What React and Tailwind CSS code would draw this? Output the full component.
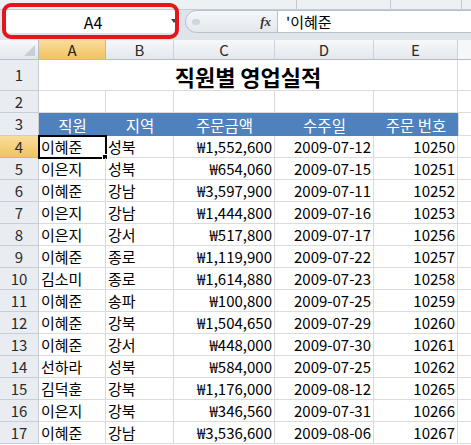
import React from "react";

const cols = [
  { key: "A", w: "w-[67px]" },
  { key: "B", w: "w-[68px]" },
  { key: "C", w: "w-[101px]" },
  { key: "D", w: "w-[99px]" },
  { key: "E", w: "w-[84px]" },
];

const rows = [
  ["이혜준", "성북", "₩1,552,600", "2009-07-12", "10250"],
  ["이은지", "성북", "₩654,060", "2009-07-15", "10251"],
  ["이혜준", "강남", "₩3,597,900", "2009-07-11", "10252"],
  ["이은지", "강남", "₩1,444,800", "2009-07-16", "10253"],
  ["이은지", "강서", "₩517,800", "2009-07-17", "10256"],
  ["이혜준", "종로", "₩1,119,900", "2009-07-22", "10257"],
  ["김소미", "종로", "₩1,614,880", "2009-07-23", "10258"],
  ["이혜준", "송파", "₩100,800", "2009-07-25", "10259"],
  ["이혜준", "강북", "₩1,504,650", "2009-07-29", "10260"],
  ["이혜준", "강서", "₩448,000", "2009-07-30", "10261"],
  ["선하라", "성북", "₩584,000", "2009-07-25", "10262"],
  ["김덕훈", "강북", "₩1,176,000", "2009-08-12", "10265"],
  ["이은지", "강북", "₩346,560", "2009-07-31", "10266"],
  ["이혜준", "강남", "₩3,536,600", "2009-08-06", "10267"],
];

const headers = ["직원", "지역", "주문금액", "수주일", "주문 번호"];

function RowHead({ n, h, active }) {
  return (
    <div
      className={`w-[39px] ${h} shrink-0 flex items-center justify-center border-b border-r ${
        active
          ? "bg-gradient-to-b from-[#f9dc9c] to-[#f1c35e] border-r-[#f29436] border-b-[#e0b45a]"
          : "bg-[#e9edf2] border-[#c7cdd6]"
      } text-[15px] text-[#2a2a2a]`}
    >
      {n}
    </div>
  );
}

function Cell({ w, align = "left", children, className = "" }) {
  const a =
    align === "right" ? "justify-end pr-[2px]" : align === "center" ? "justify-center" : "justify-start pl-[2px]";
  return (
    <div
      className={`${w} shrink-0 flex items-center ${a} border-r border-b border-[#d9dbde] whitespace-nowrap ${className}`}
    >
      {children}
    </div>
  );
}

export default function App() {
  return (
    <div className="relative w-[471px] h-[445px] overflow-hidden bg-white font-['Noto_Sans_CJK_KR','Liberation_Sans',sans-serif] text-black leading-[20px]">
      {/* ribbon edge */}
      <div className="h-[10px] flex bg-[#eef1f4] border-b border-[#c4cbd5]">
        <div className="w-[297px] border-r border-[#c4cbd5]" />
        <div className="w-[94px] border-r border-[#c4cbd5]" />
        <div className="w-[71px] border-r border-[#c4cbd5]" />
      </div>

      {/* formula bar */}
      <div className="h-[30px] bg-[#dfe4ea] flex items-start">
        <div className="w-[176px] ml-[4px] h-[23px] bg-white flex items-center relative">
          <span className="flex-1 text-center text-[16px] pl-[2px]">A4</span>
          <span className="absolute right-[3px] top-[9px] w-0 h-0 border-l-[3px] border-r-[3px] border-t-[4px] border-l-transparent border-r-transparent border-t-[#444]" />
        </div>
        <div className="ml-[5px] w-[93px] h-[23px] rounded-l-full border border-[#b8c0cb] bg-gradient-to-b from-[#f4f6f8] to-[#e4e8ed] flex items-center relative">
          <span className="ml-[6px] w-[8px] h-[6px] rounded-full bg-[#cfd5dc]" />
          <span className="ml-auto mr-[6px] italic font-['Liberation_Serif',serif] font-bold text-[13px] text-[#333]">
            fx
          </span>
        </div>
        <div className="flex-1 h-[23px] bg-white border-y border-[#b8c0cb] flex items-center pl-[8px] text-[15px]">
          '이혜준
        </div>
      </div>

      {/* column headers */}
      <div className="h-[20px] flex bg-gradient-to-b from-[#f7f8fa] to-[#e3e7ec] border-b border-[#b6bec9]">
        <div className="w-[39px] shrink-0 border-r border-[#b6bec9] relative">
          <span className="absolute right-[3px] bottom-[3px] w-[11px] h-[11px] bg-[#c9cfd6] [clip-path:polygon(100%_0,100%_100%,0_100%)]" />
        </div>
        {cols.map((c) => (
          <div
            key={c.key}
            className={`${c.w} shrink-0 flex items-center justify-center text-[15px] border-r ${
              c.key === "A"
                ? "bg-gradient-to-b from-[#f9dc9c] to-[#f1c35e] border-[#e0b45a] text-[#222]"
                : "border-[#cdd3db] text-[#2a2a2a]"
            }`}
          >
            {c.key}
          </div>
        ))}
        <div className="flex-1 bg-[#f6f7f9]" />
      </div>

      {/* row 1 - title */}
      <div className="flex h-[31px]">
        <RowHead n={1} h="h-[31px]" />
        <div className="w-[419px] shrink-0 flex items-end justify-center pb-[1px] border-r border-b border-[#d9dbde] text-[22px] leading-[26px] font-bold">
          직원별 영업실적
        </div>
        <div className="flex-1 border-b border-[#d9dbde]" />
      </div>

      {/* row 2 */}
      <div className="flex h-[22px]">
        <RowHead n={2} h="h-[22px]" />
        {cols.map((c) => (
          <Cell key={c.key} w={c.w} />
        ))}
        <div className="flex-1 border-b border-[#d9dbde]" />
      </div>

      {/* row 3 - table header */}
      <div className="flex h-[23px]">
        <RowHead n={3} h="h-[23px]" />
        <div className="flex bg-[#4f81bd] text-white text-[15.5px]">
          {cols.map((c, i) => (
            <div key={c.key} className={`${c.w} shrink-0 flex items-center justify-center whitespace-nowrap`}>
              {headers[i]}
            </div>
          ))}
        </div>
        <div className="flex-1 border-l border-b border-[#d9dbde]" />
      </div>

      {/* data rows */}
      {rows.map((r, i) => (
        <div key={i} className="flex h-[22px] text-[15px]">
          <RowHead n={i + 4} h="h-[22px]" active={i === 0} />
          <Cell w={cols[0].w} className="relative">
            {r[0]}
            {i === 0 && (
              <>
                <span className="absolute -left-[1px] -top-[1px] w-[69px] h-[24px] border-2 border-black" />
                <span className="absolute -right-[3px] -bottom-[3px] w-[6px] h-[6px] bg-black border border-white" />
              </>
            )}
          </Cell>
          <Cell w={cols[1].w}>{r[1]}</Cell>
          <Cell w={cols[2].w} align="right">
            {r[2]}
          </Cell>
          <Cell w={cols[3].w} align="right">
            {r[3]}
          </Cell>
          <Cell w={cols[4].w} align="right">
            {r[4]}
          </Cell>
          <div className="flex-1 border-b border-[#d9dbde]" />
        </div>
      ))}

      {/* name box annotation */}
      <div className="absolute left-[2px] top-[3px] w-[177px] h-[36px] rounded-[9px] border-[4px] border-[#e8141b] pointer-events-none" />
    </div>
  );
}
